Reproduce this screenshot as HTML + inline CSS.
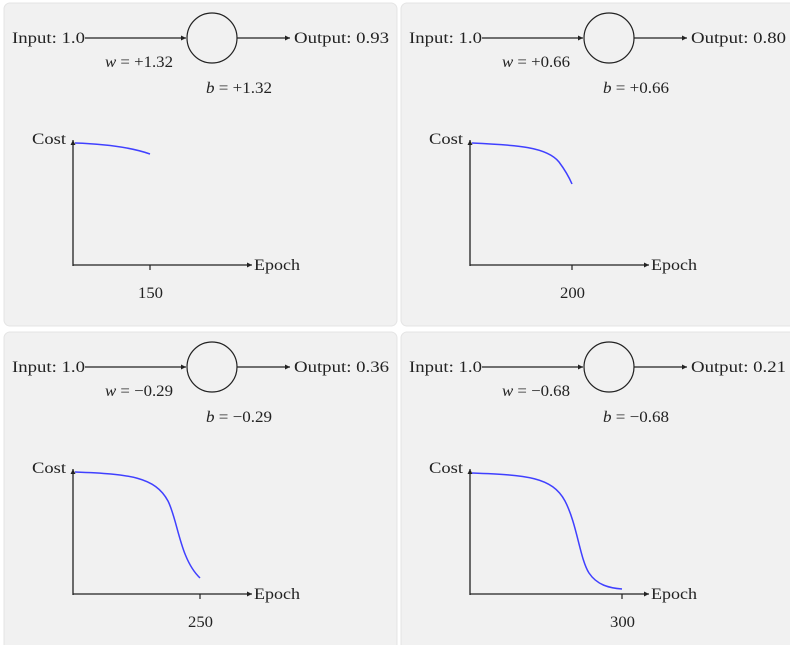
<!DOCTYPE html>
<html><head><meta charset="utf-8"><style>
html,body{margin:0;padding:0;background:#fff;}
svg{display:block;}
text{font-family:"Liberation Serif",serif;font-size:16px;fill:#222;}
.it{font-style:italic;}
</style></head><body>
<svg width="790" height="645" viewBox="0 0 790 645" xmlns="http://www.w3.org/2000/svg">
<defs>
<marker id="ar" markerWidth="6" markerHeight="6" refX="5" refY="3" orient="auto" markerUnits="userSpaceOnUse">
<path d="M0,0.5 L5,3 L0,5.5 Z" fill="#222"/></marker>
<g id="base">
<text x="12" y="43" textLength="73" lengthAdjust="spacingAndGlyphs">Input: 1.0</text>
<line x1="85" y1="38" x2="186" y2="38" stroke="#222" stroke-width="1.2" marker-end="url(#ar)"/>
<circle cx="212" cy="38" r="25" fill="none" stroke="#222" stroke-width="1.2"/>
<line x1="237" y1="38" x2="290" y2="38" stroke="#222" stroke-width="1.2" marker-end="url(#ar)"/>
<line x1="73" y1="266" x2="73" y2="140" stroke="#222" stroke-width="1.3" marker-end="url(#ar)"/>
<line x1="73" y1="265" x2="252" y2="265" stroke="#222" stroke-width="1.3" marker-end="url(#ar)"/>
<text x="32" y="144" textLength="34" lengthAdjust="spacingAndGlyphs">Cost</text>
<text x="254" y="270" textLength="46" lengthAdjust="spacingAndGlyphs">Epoch</text>
</g>
</defs>
<rect x="4" y="3" width="393" height="323" rx="6" fill="#f1f1f1" stroke="#e4e4e4"/>
<rect x="401" y="3" width="395" height="323" rx="6" fill="#f1f1f1" stroke="#e4e4e4"/>
<rect x="4" y="332" width="393" height="320" rx="6" fill="#f1f1f1" stroke="#e4e4e4"/>
<rect x="401" y="332" width="395" height="320" rx="6" fill="#f1f1f1" stroke="#e4e4e4"/>

<g>
<use href="#base"/>
<text x="294" y="43" textLength="95" lengthAdjust="spacingAndGlyphs">Output: 0.93</text>
<text x="105" y="67" textLength="68" lengthAdjust="spacingAndGlyphs"><tspan class="it">w</tspan> = +1.32</text>
<text x="206" y="93" textLength="66" lengthAdjust="spacingAndGlyphs"><tspan class="it">b</tspan> = +1.32</text>
<line x1="150" y1="265" x2="150" y2="270" stroke="#222" stroke-width="1.2"/>
<text x="138" y="298" textLength="25" lengthAdjust="spacingAndGlyphs">150</text>
<path d="M75,143 C105,144 130,147 150,154" fill="none" stroke="#4040ff" stroke-width="1.5"/>
</g>
<g transform="translate(397,0)">
<use href="#base"/>
<text x="294" y="43" textLength="95" lengthAdjust="spacingAndGlyphs">Output: 0.80</text>
<text x="105" y="67" textLength="68" lengthAdjust="spacingAndGlyphs"><tspan class="it">w</tspan> = +0.66</text>
<text x="206" y="93" textLength="66" lengthAdjust="spacingAndGlyphs"><tspan class="it">b</tspan> = +0.66</text>
<line x1="175" y1="265" x2="175" y2="270" stroke="#222" stroke-width="1.2"/>
<text x="163" y="298" textLength="25" lengthAdjust="spacingAndGlyphs">200</text>
<path d="M75,143 C120,145 150,147 162,162 C168,170 172,177 175,184" fill="none" stroke="#4040ff" stroke-width="1.5"/>
</g>
<g transform="translate(0,329)">
<use href="#base"/>
<text x="294" y="43" textLength="95" lengthAdjust="spacingAndGlyphs">Output: 0.36</text>
<text x="105" y="67" textLength="68" lengthAdjust="spacingAndGlyphs"><tspan class="it">w</tspan> = −0.29</text>
<text x="206" y="93" textLength="66" lengthAdjust="spacingAndGlyphs"><tspan class="it">b</tspan> = −0.29</text>
<line x1="200" y1="265" x2="200" y2="270" stroke="#222" stroke-width="1.2"/>
<text x="188" y="298" textLength="25" lengthAdjust="spacingAndGlyphs">250</text>
<path d="M75,143 C130,145 155,148 168,172 C178,192 180,230 200,249" fill="none" stroke="#4040ff" stroke-width="1.5"/>
</g>
<g transform="translate(397,329)">
<use href="#base"/>
<text x="294" y="43" textLength="95" lengthAdjust="spacingAndGlyphs">Output: 0.21</text>
<text x="105" y="67" textLength="68" lengthAdjust="spacingAndGlyphs"><tspan class="it">w</tspan> = −0.68</text>
<text x="206" y="93" textLength="66" lengthAdjust="spacingAndGlyphs"><tspan class="it">b</tspan> = −0.68</text>
<line x1="225" y1="265" x2="225" y2="270" stroke="#222" stroke-width="1.2"/>
<text x="213" y="298" textLength="25" lengthAdjust="spacingAndGlyphs">300</text>
<path d="M75,144 C130,146 155,148 168,172 C180,195 183,230 192,244 C200,256 212,259 225,260" fill="none" stroke="#4040ff" stroke-width="1.5"/>
</g>
</svg>
</body></html>
